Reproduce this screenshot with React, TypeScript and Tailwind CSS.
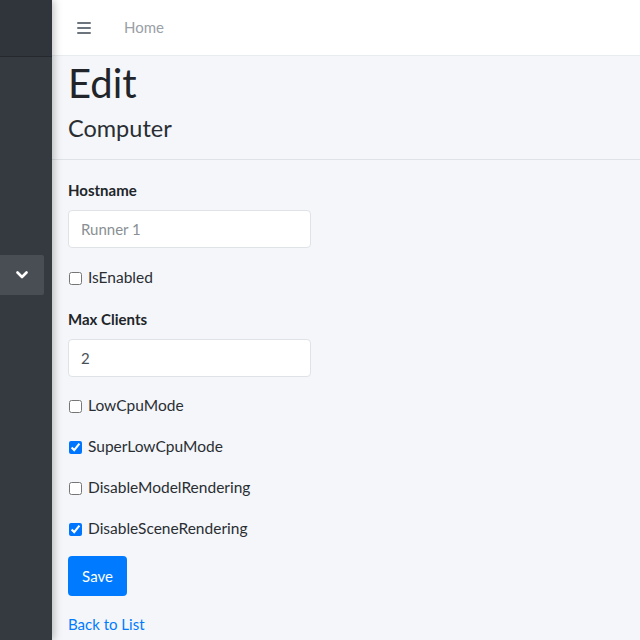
import React from "react";

const font = { fontFamily: "Lato, 'Open Sans', sans-serif" };

function Check({ label, checked }: { label: string; checked?: boolean }) {
  return (
    <label className="flex items-center h-[20px] text-[15.5px] text-[#2a2e33]">
      <input
        type="checkbox"
        defaultChecked={checked}
        className="w-[13px] h-[13px] m-0 mr-[6px] ml-[1px] accent-[#0075ff]"
      />
      {label}
    </label>
  );
}

function Field({ label, value, muted }: { label: string; value: string; muted?: boolean }) {
  return (
    <div className="flex flex-col">
      <div className="text-[15px] font-bold text-[#212529] h-[20px] leading-[20px]">{label}</div>
      <div
        className={`mt-[10px] w-[243px] h-[38px] bg-white border border-[#dfe3e7] rounded-[4px] flex items-center px-[12px] text-[15px] ${
          muted ? "text-[#8a8f94]" : "text-[#495057]"
        }`}
      >
        {value}
      </div>
    </div>
  );
}

export default function App() {
  return (
    <div className="flex w-[640px] h-[640px] overflow-hidden bg-[#f4f6f9]" style={font}>
      {/* sidebar */}
      <aside className="relative z-10 w-[52px] shrink-0 bg-[#343a40] flex flex-col shadow-[2px_0_8px_rgba(0,0,0,0.25)]">
        <div className="h-[57px] bg-[#30353b] border-b border-[#25292d]" />
        <div className="mt-[198px] w-[44px] h-[40px] bg-[#494e54] rounded-r-[2px] flex items-center justify-center">
          <svg width="12" height="8" viewBox="0 0 12 8" fill="none">
            <path d="M1.5 1.5 L6 6 L10.5 1.5" stroke="#ffffff" strokeWidth="2.6" strokeLinecap="round" strokeLinejoin="round" />
          </svg>
        </div>
      </aside>

      {/* main */}
      <div className="flex-1 flex flex-col min-w-0">
        <nav className="h-[56px] shrink-0 bg-white border-b border-[#e9ecef] flex items-center">
          <div className="ml-[25px] w-[14px] flex flex-col gap-[3px]">
            <span className="h-[2px] bg-[#6c757d] rounded" />
            <span className="h-[2px] bg-[#6c757d] rounded" />
            <span className="h-[2px] bg-[#6c757d] rounded" />
          </div>
          <span className="ml-[33px] text-[15px] text-[#9aa0a6]">Home</span>
        </nav>

        <div className="flex flex-col">
          <div className="px-[16px]">
            <h1 className="text-[40px] leading-[48px] text-[#212529] mt-[3px]">Edit</h1>
            <h4 className="text-[23.5px] leading-[28px] text-[#2a2e33] mt-[7px]">Computer</h4>
          </div>
          <div className="mt-[17px] h-px bg-[#dfe2e6]" />

          <div className="px-[16px] pt-[20px] flex flex-col">
            <Field label="Hostname" value="Runner 1" muted />
            <div className="mt-[20px]">
              <Check label="IsEnabled" />
            </div>
            <div className="mt-[21px]">
              <Field label="Max Clients" value="2" />
            </div>
            <div className="mt-[19px] flex flex-col gap-[21px]">
              <Check label="LowCpuMode" />
              <Check label="SuperLowCpuMode" checked />
              <Check label="DisableModelRendering" />
              <Check label="DisableSceneRendering" checked />
            </div>
            <button className="mt-[17px] w-[59px] h-[40px] bg-[#007bff] text-white text-[15px] rounded-[4px]">
              Save
            </button>
            <a className="mt-[18px] text-[15px] text-[#007bff] leading-[20px]">Back to List</a>
          </div>
        </div>
      </div>
    </div>
  );
}
